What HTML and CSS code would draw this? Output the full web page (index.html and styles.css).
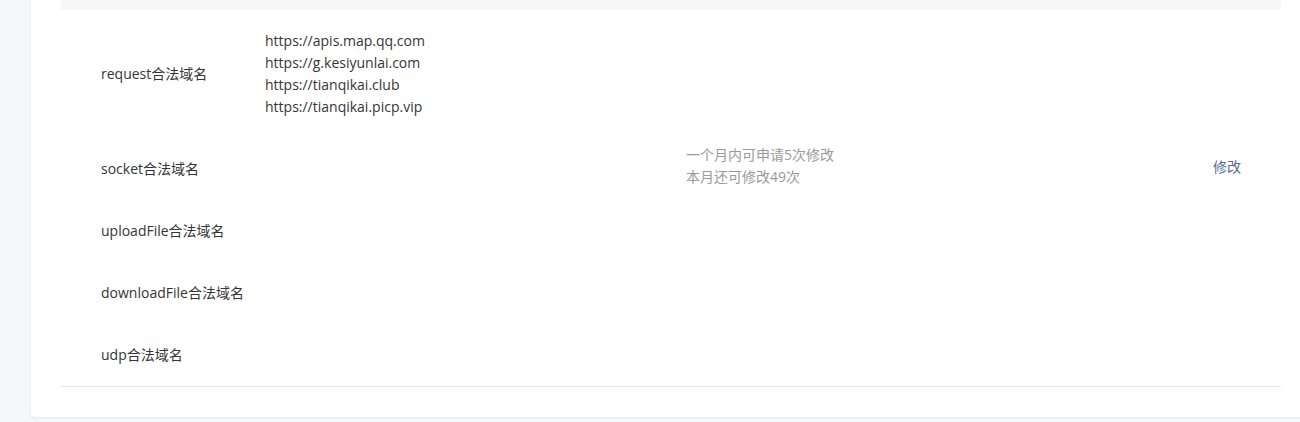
FILE: index.html
```html
<!DOCTYPE html>
<html lang="zh-CN">
<head>
<meta charset="utf-8">
<title>服务器域名</title>
<link rel="stylesheet" href="styles.css">
</head>
<body>
<div class="page">
  <div class="card">
    <div class="card-head"></div>
    <div class="table">
      <div class="cell label r1">request合法域名</div>
      <div class="cell value r1">
        <div>https://apis.map.qq.com</div>
        <div>https://g.kesiyunlai.com</div>
        <div>https://tianqikai.club</div>
        <div>https://tianqikai.picp.vip</div>
      </div>
      <div class="cell notes">
        <div>一个月内可申请5次修改</div>
        <div>本月还可修改49次</div>
      </div>
      <div class="cell action"><a class="link" href="#">修改</a></div>

      <div class="cell label r2">socket合法域名</div>
      <div class="cell value r2"></div>
      <div class="cell label r3">uploadFile合法域名</div>
      <div class="cell value r3"></div>
      <div class="cell label r4">downloadFile合法域名</div>
      <div class="cell value r4"></div>
      <div class="cell label r5">udp合法域名</div>
      <div class="cell value r5"></div>
    </div>
  </div>
</div>
</body>
</html>
```

FILE: styles.css
```css
html, body {
  margin: 0;
  padding: 0;
}
body {
  background: #f6f7f9;
  font-family: "Open Sans", "Noto Sans CJK SC", sans-serif;
  font-size: 14px;
  color: #353535;
  overflow: hidden;
  width: 1300px;
  height: 422px;
}
.page {
  padding-left: 31px;
}
.card {
  width: 1220px;
  background: #fff;
  padding: 0 30px 30px;
  border-radius: 0 0 4px 4px;
  box-shadow: 0 1px 2px rgba(0, 0, 0, 0.08);
}
.card-head {
  height: 10px;
  background: #f6f7f9;
}
.table {
  display: grid;
  grid-template-columns: 204px 421px 1fr auto;
  grid-template-rows: 128px 62px 62px 62px 62px;
  border-bottom: 1px solid #e5e5e5;
}
.cell {
  line-height: 22px;
}
.label {
  grid-column: 1;
  padding-left: 40px;
  display: flex;
  align-items: center;
}
.value {
  grid-column: 2;
  display: flex;
  flex-direction: column;
  justify-content: center;
}
.r1 { grid-row: 1; }
.r2 { grid-row: 2; }
.r3 { grid-row: 3; }
.r4 { grid-row: 4; }
.r5 { grid-row: 5; }
.notes {
  grid-column: 3;
  grid-row: 1 / 5;
  align-self: center;
  color: #9a9a9a;
  padding-bottom: 2px;
}
.action {
  grid-column: 4;
  grid-row: 1 / 5;
  align-self: center;
  padding-right: 40px;
}
.link {
  color: #576b95;
  text-decoration: none;
}
```
